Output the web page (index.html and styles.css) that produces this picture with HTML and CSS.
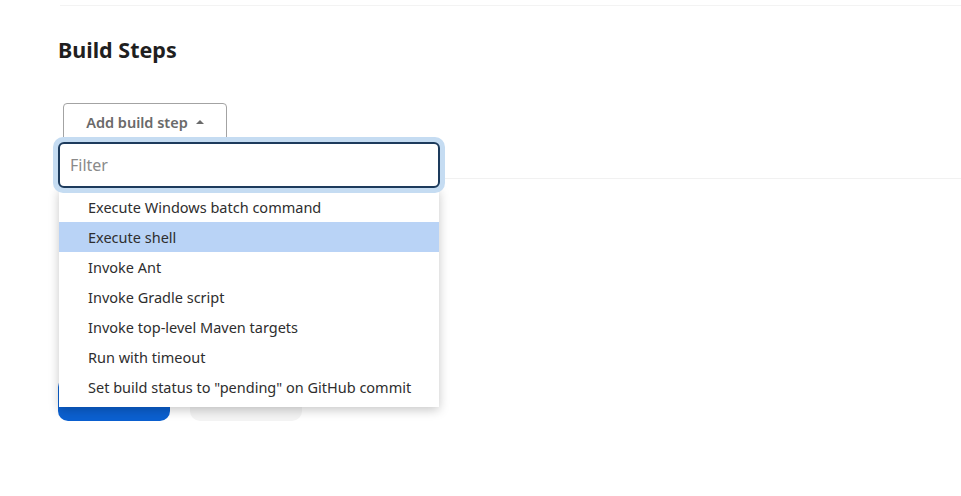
FILE: index.html
```html
<!DOCTYPE html>
<html lang="en">
<head>
<meta charset="utf-8">
<title>Build Steps</title>
<link rel="stylesheet" href="styles.css">
</head>
<body>
<div class="top-rule"></div>
<main class="page">
  <h2 class="section-title">Build Steps</h2>
  <div class="add-wrap">
    <button class="add-btn" type="button">Add build step <span class="caret"></span></button>
    <div class="popup">
      <div class="filter-ring"><input class="filter" type="text" placeholder="Filter"></div>
      <ul class="menu">
        <li class="item">Execute Windows batch command</li>
        <li class="item active">Execute shell</li>
        <li class="item">Invoke Ant</li>
        <li class="item">Invoke Gradle script</li>
        <li class="item">Invoke top-level Maven targets</li>
        <li class="item">Run with timeout</li>
        <li class="item">Set build status to "pending" on GitHub commit</li>
      </ul>
    </div>
  </div>
  <div class="divider"></div>
  <div class="actions">
    <button class="btn-primary" type="button">Save</button>
    <button class="btn-secondary" type="button">Apply</button>
  </div>
</main>
</body>
</html>
```
FILE: styles.css
```css
* { box-sizing: border-box; }
html, body { margin: 0; padding: 0; background: #fff; }
body {
  font-family: "Noto Sans", "Open Sans", sans-serif;
  color: #333;
  width: 961px;
  height: 496px;
  overflow: hidden;
}
.top-rule {
  margin-left: 60px;
  height: 6px;
  border-bottom: 1px solid #f3f3f3;
}
.page {
  padding-left: 58px;
}
.section-title {
  margin: 30px 0 0 0;
  font-size: 21.5px;
  line-height: 28px;
  font-weight: 700;
  color: #1f1f1f;
}
.add-wrap {
  position: relative;
  margin-top: 39px;
  height: 37px;
}
.add-btn {
  margin-left: 5px;
  width: 164px;
  height: 38px;
  border: 1.5px solid #a3a3a3;
  border-radius: 4px;
  background: #fff;
  font-family: inherit;
  font-size: 14.5px;
  font-weight: 600;
  color: #6a6a6a;
  display: flex;
  align-items: center;
  justify-content: center;
  gap: 8px;
  padding: 0 0 1px 0;
}
.caret {
  width: 0;
  height: 0;
  border-left: 4px solid transparent;
  border-right: 4px solid transparent;
  border-bottom: 4px solid #6a6a6a;
  margin-top: 1px;
}
.popup {
  position: absolute;
  left: -5px;
  top: 34px;
  width: 392px;
  z-index: 5;
}
.filter-ring {
  padding: 5px;
  background: #c5dcf2;
  border-radius: 10px;
}
.filter {
  display: block;
  width: 382px;
  height: 46px;
  border: 2px solid #1d3b5c;
  border-radius: 6px;
  background: #fff;
  font-family: inherit;
  font-size: 16px;
  padding: 0 10px;
  color: #333;
  outline: none;
}
.filter::placeholder { color: #8a8a8a; }
.menu {
  list-style: none;
  margin: -5px 0 0 6px;
  padding: 4px 0 5px 0;
  width: 380px;
  background: #fff;
  box-shadow: 0 3px 10px rgba(0,0,0,0.22);
  position: relative;
  z-index: -1;
}
.item {
  height: 30px;
  line-height: 30px;
  padding-left: 29px;
  font-size: 14.5px;
  color: #2e2e2e;
  white-space: nowrap;
}
.item.active { background: #b9d3f6; }
.divider {
  margin-top: 38px;
  height: 1px;
  background: #f1f1f1;
}
.actions {
  display: flex;
  align-items: flex-end;
  gap: 20px;
  margin-top: 198px;
}
.btn-primary {
  width: 112px;
  height: 44px;
  border: none;
  border-radius: 10px;
  background: #0b60d0;
  color: #fff;
  font-family: inherit;
  font-size: 14px;
  font-weight: 600;
  padding: 0 0 12px 0;
}
.btn-secondary {
  width: 112px;
  height: 42px;
  border: none;
  border-radius: 10px;
  background: #f4f4f4;
  color: #333;
  font-family: inherit;
  font-size: 14px;
  font-weight: 600;
  padding: 0 0 12px 0;
}
```
